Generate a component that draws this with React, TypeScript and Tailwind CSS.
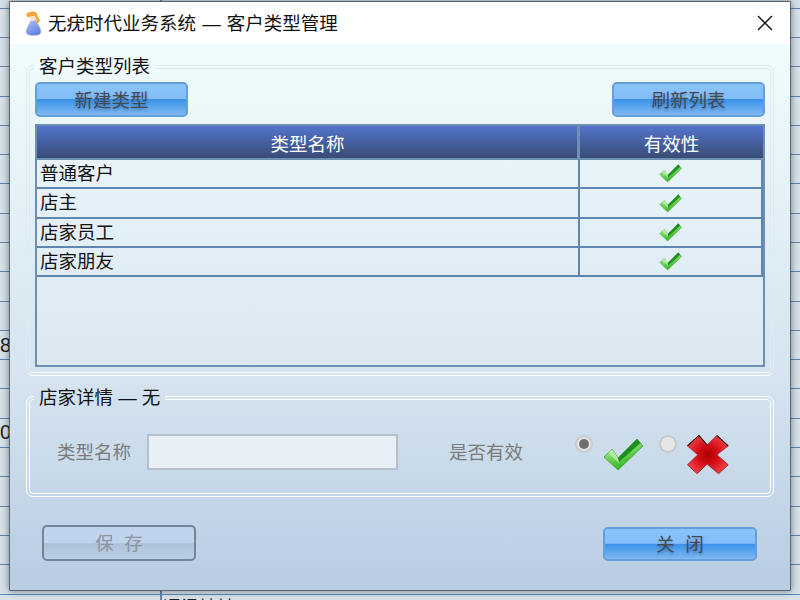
const FONT = "[font-family:'Liberation_Sans','Noto_Sans_CJK_SC',sans-serif]";

function Check({ className, id }: { className: string; id: string }) {
  return (
    <svg viewBox="0 0 42 34" className={className}>
      <defs>
        <linearGradient id={id} x1="0.1" y1="0.2" x2="0.5" y2="1">
          <stop offset="0" stopColor="#b0ec98" />
          <stop offset="0.55" stopColor="#62d04a" />
          <stop offset="1" stopColor="#2dab25" />
        </linearGradient>
      </defs>
      <polygon points="1,19 9,11 15,20 34,1 40,8 15,32" fill={`url(#${id})`} stroke="#36a232" strokeWidth="0.8" strokeLinejoin="round" />
      <polygon points="15,20 34,1 37.5,5 16,24" fill="#1c8f1e" />
      <polygon points="9,11 15,20 16,25 5,15" fill="#c8f2b6" opacity="0.75" />
    </svg>
  );
}

function Cross() {
  return (
    <svg viewBox="0 0 42 42" className="h-[45px] w-[45px]">
      <defs>
        <radialGradient id="cross" cx="0.5" cy="0.5" r="0.6">
          <stop offset="0" stopColor="#a80000" />
          <stop offset="0.4" stopColor="#d40c12" />
          <stop offset="1" stopColor="#f04a50" />
        </radialGradient>
      </defs>
      <polygon points="2.3,12 13,2.3 20.7,11.3 29.7,2.3 40.3,12 29.7,20.3 40.3,29.7 31.3,38 20.7,29 11.3,38 2.3,29.7 12,20.3" fill="url(#cross)" stroke="#a3161b" strokeWidth="0.8" strokeLinejoin="round" />
      <polyline points="2.3,12 13,2.3 20.7,11.3" fill="none" stroke="#1a0506" strokeWidth="1" />
      <polyline points="29.7,2.3 40.3,12" fill="none" stroke="#1a0506" strokeWidth="1" />
    </svg>
  );
}

function Avatar() {
  return (
    <svg viewBox="0 0 17 25" className="h-[25px] w-[17px]">
      <defs>
        <linearGradient id="dress" x1="0" y1="0" x2="0.6" y2="1">
          <stop offset="0" stopColor="#b4c4f6" />
          <stop offset="1" stopColor="#5f7ee0" />
        </linearGradient>
      </defs>
      <path d="M6 9 L11 9 C12.5 13 16 17 16 20.5 C16 24 12.5 24.5 8.5 24.5 C4.5 24.5 1 24 1 20.5 C1 17 4.5 13 6 9 Z" fill="url(#dress)" stroke="#c5cbdc" strokeWidth="0.8" />
      <circle cx="8" cy="6.5" r="3.4" fill="#f8e4cc" />
      <path d="M1 4 C2 1 6 0 9 0.5 C12 1 12.5 3 12.5 5 C13 7 15.5 8 14.5 10.5 C13.5 12 12.5 12.5 11.5 13 C12 10 11.5 7 9.5 5 C7 5 5 5 4 6.5 C3 6 1.5 5.5 1 4 Z" fill="#f2a83c" />
    </svg>
  );
}

function Btn({ label, disabled, className }: { label: string; disabled?: boolean; className?: string }) {
  if (disabled) {
    return (
      <button className={`h-[36px] w-[154px] rounded-[5px] border-2 border-[#728599] bg-[linear-gradient(#bfd4ec_0,#bfd4ec_50%,#adc2d8_52%,#bbcfe5_100%)] pt-[2px] text-[18.5px] whitespace-pre text-[#8c959e] ${className ?? ""}`}>
        {label}
      </button>
    );
  }
  return (
    <button className={`rounded-[5px] border-2 border-[#649fdb] bg-[linear-gradient(#8ac4fb_0,#84bdf8_48%,#3b92ea_50%,#7fb9f1_100%)] pt-[2px] text-[18.5px] whitespace-pre text-[#3f4a55] [text-shadow:0_2px_3px_rgba(0,0,0,0.25)] ${className ?? ""}`}>
      {label}
    </button>
  );
}

function Radio({ on }: { on?: boolean }) {
  return (
    <span className="flex h-[18px] w-[18px] items-center justify-center rounded-full border-2 border-[#c9c9c9] bg-[#e6e6e6]">
      {on && <span className="h-[10px] w-[10px] rounded-full bg-[#6e6e6e]" />}
    </span>
  );
}

const rows = ["普通客户", "店主", "店家员工", "店家朋友"];

export default function App() {
  return (
    <div className={`relative h-[600px] w-[800px] overflow-hidden bg-[repeating-linear-gradient(#d5e0e8_0,#d5e0e8_7.71px,#5f86b0_7.71px,#5f86b0_8.71px,#d5e0e8_8.71px,#d5e0e8_29.29px)] pt-px pl-[9px] ${FONT}`}>
      <div className="absolute top-0 left-[160px] h-full w-[2px] bg-[#5f86b0]" />
      <span className="absolute top-[333px] left-0 text-[20px] leading-[24px] text-[#222]">8</span>
      <span className="absolute top-[420px] left-0 text-[20px] leading-[24px] text-[#222]">0</span>
      <span className="absolute top-[596px] left-[163px] text-[18px] leading-[24px] text-[#222]">通讯地址</span>

      <div className="relative flex h-[590px] w-[782px] flex-col border border-[#5a6673] bg-[linear-gradient(#f4fffe_0,#d4e3ef_65%,#b8cce2_100%)] shadow-[0_0_7px_rgba(0,0,0,0.45)]">
        <div className="flex h-[42px] items-center bg-white pl-[15px]">
          <Avatar />
          <span className="ml-[6px] pt-[2px] text-[18.5px] [word-spacing:1px] text-[#111]">无疣时代业务系统 — 客户类型管理</span>
          <svg viewBox="0 0 16 16" className="mr-[17px] ml-auto h-[16px] w-[16px]">
            <path d="M1 1 L15 15 M15 1 L1 15" stroke="#111" strokeWidth="1.4" />
          </svg>
        </div>

        <div className="flex flex-1 flex-col px-[16px] pt-[10px]">
          <fieldset className="h-[322px] rounded-[7px] border-[4px] border-double border-[#e2e8ef] border-b-white pr-[5px] pl-[5px]">
            <legend className="-ml-[1px] px-[5px] text-[18.5px] leading-[26px] text-[#111]">客户类型列表</legend>
            <div className="flex justify-between">
              <Btn label="新建类型" className="mt-[2px] h-[35px] w-[153px]" />
              <Btn label="刷新列表" className="mt-[2px] h-[35px] w-[153px]" />
            </div>
            <div className="mt-[7px] h-[243px] border-2 border-[#6d8fb1] bg-[linear-gradient(#eaf5fa,#dbe8f2)]">
              <div className="grid h-[34px] grid-cols-[543px_1fr] border-b-2 border-[#6d8fb1] bg-[linear-gradient(#5274cc,#394c75)] text-[18.5px] text-white">
                <div className="flex items-center justify-center border-r-[3px] border-[#6d8fb1] pt-[5px] pl-[1px]">类型名称</div>
                <div className="flex items-center justify-center pt-[5px]">有效性</div>
              </div>
              {rows.map((r, i) => (
                <div key={r} className="grid h-[29.3px] grid-cols-[543px_1fr] border-r-2 border-b-2 border-[#5f86b0] text-[18.5px] text-[#111]">
                  <div className="flex items-center border-r-2 border-[#5f86b0] pl-[3px]">{r}</div>
                  <div className="flex items-center justify-center">
                    <Check id={`row-check-${i}`} className="h-[19px] w-[24px]" />
                  </div>
                </div>
              ))}
            </div>
          </fieldset>

          <fieldset className="mt-[9px] h-[112px] rounded-[7px] border-[4px] border-double border-white pr-[5px] pl-[5px]">
            <legend className="-ml-[1px] px-[5px] text-[18.5px] leading-[26px] text-[#111]">店家详情 — 无</legend>
            <div className="flex h-[80px] items-center pt-[2px] pl-[22px] text-[18.5px] text-[#7a7a7a]">
              <span className="pt-[2px]">类型名称</span>
              <div className="ml-[16px] h-[36px] w-[251px] border-2 border-[#b6c0cd] bg-[#e8eff6]" />
              <span className="ml-[51px] pt-[2px]">是否有效</span>
              <div className="mb-[16px] ml-[52px]">
                <Radio on />
              </div>
              <Check id="big-check" className="mt-[6px] ml-[10px] h-[34px] w-[42px]" />
              <div className="mb-[16px] ml-[14px]">
                <Radio />
              </div>
              <div className="mt-[6px] ml-[8px]">
                <Cross />
              </div>
            </div>
          </fieldset>

          <div className="mt-[28px] flex items-end justify-between pr-[17px] pl-[16px]">
            <Btn label="保  存" disabled />
            <Btn label="关  闭" className="h-[34px] w-[154px]" />
          </div>
        </div>
      </div>
    </div>
  );
}
